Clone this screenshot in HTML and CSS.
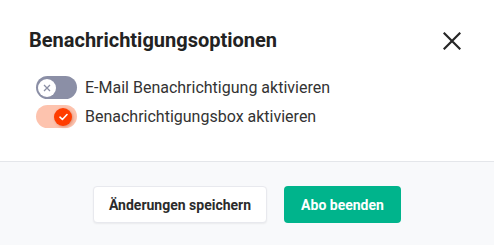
FILE: index.html
```html
<!DOCTYPE html>
<html lang="de">
<head>
<meta charset="utf-8">
<link rel="stylesheet" href="styles.css">
</head>
<body>
<div class="modal">
  <div class="modal-body">
    <div class="header">
      <h2 class="title">Benachrichtigungsoptionen</h2>
      <button class="close" aria-label="Schließen">
        <svg width="18" height="18" viewBox="0 0 18 18"><path d="M1.5 1.5 L16.5 16.5 M16.5 1.5 L1.5 16.5" stroke="#262626" stroke-width="2.2" stroke-linecap="square" fill="none"/></svg>
      </button>
    </div>
    <div class="options">
      <label class="option">
        <span class="switch off"><span class="knob"><svg width="8" height="8" viewBox="0 0 8 8"><path d="M1 1 L7 7 M7 1 L1 7" stroke="#8a8ea4" stroke-width="1.3" fill="none"/></svg></span></span>
        <span class="label">E-Mail Benachrichtigung aktivieren</span>
      </label>
      <label class="option">
        <span class="switch on"><span class="knob"><svg width="9" height="8" viewBox="0 0 9 8"><path d="M1 4.2 L3.4 6.5 L8 1.5" stroke="#fff" stroke-width="1.6" fill="none" stroke-linecap="round" stroke-linejoin="round"/></svg></span></span>
        <span class="label">Benachrichtigungsbox aktivieren</span>
      </label>
    </div>
  </div>
  <div class="footer">
    <button class="btn btn-secondary">Änderungen speichern</button>
    <button class="btn btn-primary">Abo beenden</button>
  </div>
</div>
</body>
</html>
```
FILE: styles.css
```css
* { box-sizing: border-box; }
html, body { margin: 0; padding: 0; background: #fff; }
body { font-family: Roboto, "Liberation Sans", sans-serif; width: 494px; height: 245px; overflow: hidden; }
.modal { display: flex; flex-direction: column; height: 245px; }
.modal-body { height: 161px; padding: 27px 33px 0 29px; }
.header { display: flex; justify-content: space-between; align-items: center; height: 26px; }
.title { margin: 0; font-size: 20px; line-height: 26px; font-weight: 700; color: #222; letter-spacing: 0; }
.close { border: 0; background: none; padding: 0; width: 18px; height: 18px; display: flex; margin-top: 1px; }
.options { display: flex; flex-direction: column; gap: 5px; margin-top: 22.5px; padding-left: 7px; }
.option { display: flex; align-items: center; gap: 8px; height: 24px; }
.switch { position: relative; width: 41px; height: 23px; border-radius: 12px; flex: none; }
.switch.off { background: #8b8fa6; }
.switch.on { background: #fdc3ae; }
.knob { position: absolute; top: 2.5px; width: 18px; height: 18px; border-radius: 50%; display: flex; align-items: center; justify-content: center; }
.switch.off .knob { left: 1.5px; background: #fff; }
.switch.on .knob { left: 18px; background: #ff3d00; box-shadow: 1px 1px 3px rgba(160, 40, 0, 0.35); }
.label { font-size: 16px; line-height: 24px; color: #333; }
.footer { flex: 1; background: #f8f9fb; border-top: 1px solid #e4e6ea; display: flex; justify-content: center; align-items: flex-start; gap: 17px; padding-top: 24px; }
.btn { font-family: Roboto, "Liberation Sans", sans-serif; font-size: 14px; font-weight: 700; height: 37px; border-radius: 4px; padding: 0 12px; cursor: pointer; white-space: nowrap; }
.btn-secondary { background: #fff; color: #2b2b2b; border: 1px solid #e8e9ee; box-shadow: 0 1px 2px rgba(0,0,0,0.06); width: 174px; }
.btn-primary { background: #00b48c; color: #fff; border: 0; width: 117px; }
```
